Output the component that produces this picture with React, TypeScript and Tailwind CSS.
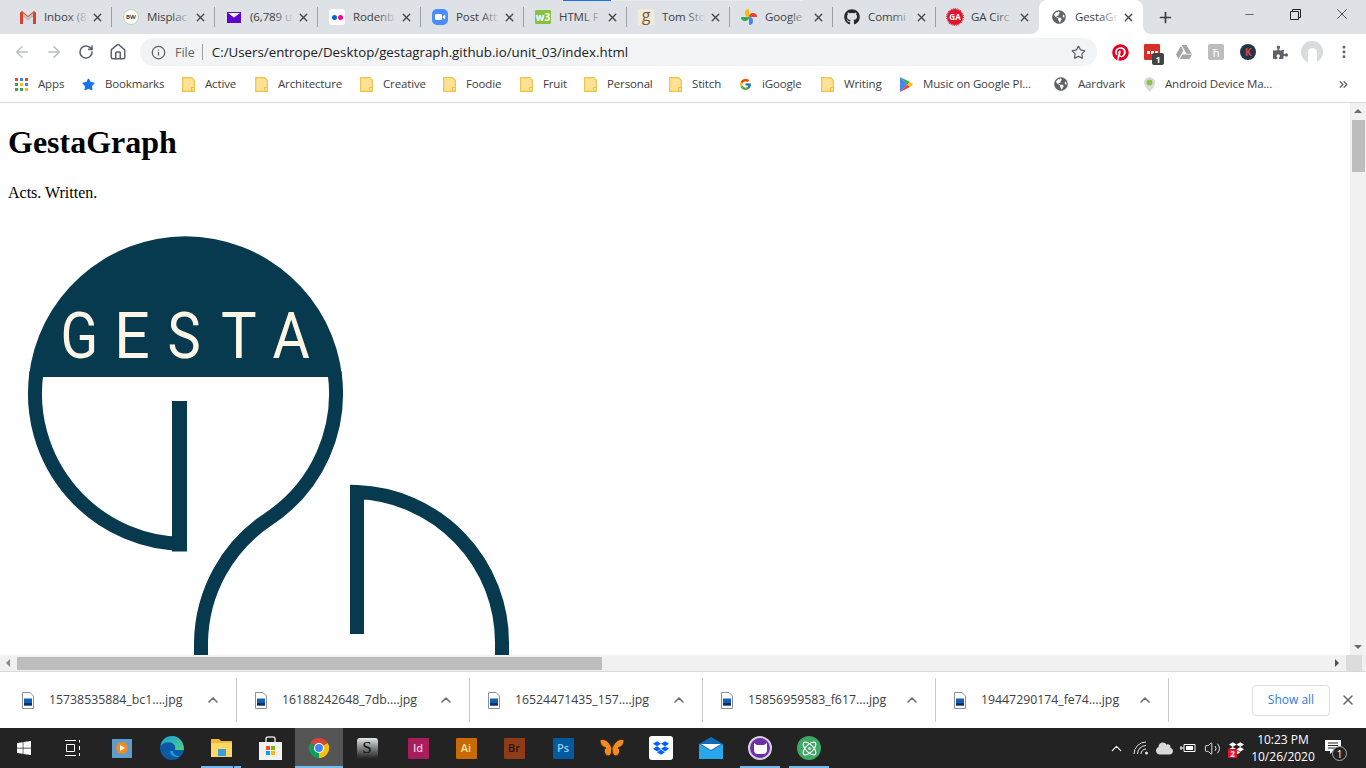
import { ArrowLeft, ArrowRight, RotateCw, Home, Info, Star, X, Plus, Minus, ChevronUp, ChevronsRight, MoreVertical, Volume2, Atom } from "lucide-react";
import { FaGithub, FaGlobeAmericas, FaPinterest, FaGoogleDrive, FaPuzzlePiece, FaWindows, FaDropbox, FaCloud, FaStar } from "react-icons/fa";
import { FcGoogle } from "react-icons/fc";
import type { ReactNode } from "react";

function Tab({ icon, title, last }: { icon: ReactNode; title: string; last?: boolean }) {
  return (
    <div className="relative flex h-[34px] w-[103px] shrink-0 items-center pl-[11px]">
      <div className="flex h-4 w-4 shrink-0 items-center justify-center">{icon}</div>
      <div className="relative ml-2 w-[44px] overflow-hidden whitespace-nowrap text-[11.5px] tracking-[-0.1px] text-[#3c4043]">
        {title}
        <div className="absolute inset-y-0 right-0 w-5 bg-gradient-to-r from-transparent to-[#dee1e6]" />
      </div>
      <X size={13} strokeWidth={2.6} className="ml-[3px] shrink-0 text-[#45484c]" />
      {!last && <div className="absolute right-0 top-[7px] h-5 w-px bg-[#9aa0a6]" />}
    </div>
  );
}

function Folder() {
  return (
    <svg width="13" height="15" viewBox="0 0 13 15" className="shrink-0">
      <path d="M.7.7h9l2.6 2.6v11H.7z" fill="#fde293" stroke="#f0c14b" strokeWidth="1.2" />
      <rect x="9.5" y="10.5" width="3" height="3.5" fill="#fde293" stroke="#f0c14b" />
    </svg>
  );
}

function Mark({ icon, label, className }: { icon: ReactNode; label: string; className: string }) {
  return (
    <div className={`flex shrink-0 items-center whitespace-nowrap text-[11.5px] tracking-[-0.15px] text-[#3c4043] ${className}`}>
      {icon}
      <span className="ml-[10px]">{label}</span>
    </div>
  );
}

function Download({ name, className }: { name: string; className: string }) {
  return (
    <div className={`flex h-[44px] shrink-0 items-center border-r border-[#c8c8c8] ${className}`}>
      <svg width="12" height="17" viewBox="0 0 12 17" className="shrink-0">
        <path d="M.5.5h7.5l3.5 3.5v12.500H.5z" fill="#fff" stroke="#8a8f94" />
        <rect x="2" y="6.500" width="8" height="7" fill="#0f5fb4" />
        <rect x="2" y="11" width="8" height="2.500" fill="#0b2f66" />
      </svg>
      <span className="ml-[15px] w-[156px] whitespace-nowrap text-[12.3px] text-[#3c4043]">{name}</span>
      <ChevronUp size={16} strokeWidth={2.4} className="text-[#6b6f73]" />
    </div>
  );
}

function Slot({ className, children }: { className?: string; children: ReactNode }) {
  return <div className={`flex h-10 w-12 shrink-0 items-center justify-center ${className ?? ""}`}>{children}</div>;
}

function AdobeTile({ label, bg, fg }: { label: string; bg: string; fg: string }) {
  return (
    <div className={`flex h-[21px] w-[21px] items-center justify-center rounded-[1px] text-[11px] font-semibold ${bg} ${fg}`}>
      {label}
    </div>
  );
}

function Logo() {
  const stroke = "#083a4f";
  return (
    <svg width="520" height="520" viewBox="8 217 520 520" className="ml-2 block shrink-0">
      <path d="M28.900 377A157.500 157.500 0 0 1 342.100 377Z" fill={stroke} />
      <g fill="#fdf6e6" fontFamily="Roboto, sans-serif" fontSize="65">
        <text transform="translate(60.500 358) scale(.85 1)">G</text>
        <text transform="translate(114 358) scale(.97 1)">E</text>
        <text transform="translate(167.500 358) scale(.86 1)">S</text>
        <text transform="translate(221 358) scale(.92 1)">T</text>
        <text transform="translate(272.500 358) scale(.88 1)">A</text>
      </g>
      <rect x="172" y="401" width="15" height="150.500" fill={stroke} />
      <g fill="none" stroke={stroke} strokeWidth="14">
        <path d="M187 544A150.500 150.500 0 0 1 36.500 372" />
        <path d="M334.500 372A150.500 150.500 0 0 1 269 518.700A150.500 150.500 0 0 0 201 642.500V700" />
        <path d="M357 634V492.100A150.500 150.500 0 0 1 502 642.500V700" />
      </g>
    </svg>
  );
}

export default function App() {
  return (
    <div className="flex h-[768px] w-[1366px] flex-col overflow-hidden bg-white font-['Open_Sans',sans-serif]">
      {/* tab strip */}
      <div className="relative flex h-[34px] shrink-0 items-center bg-[#dee1e6] pl-[9px]">
        <Tab
          title="Inbox (8"
          icon={
            <svg width="16" height="13" viewBox="0 0 16 13">
              <path d="M0 1.500V13h3V5l5 4 5-4v8h3V1.500L14 0 8 5 2 0z" fill="#d9402f" />
              <path d="M3 5l5 4 5-4V2L8 6 3 2z" fill="#c4c4c4" />
            </svg>
          }
        />
        <Tab
          title="Misplac"
          icon={
            <div className="flex h-4 w-4 items-center justify-center rounded-full border border-[#b9d3b0] bg-white text-[6px] font-bold text-[#444]">
              BW
            </div>
          }
        />
        <Tab
          title="(6,789 u"
          icon={
            <svg width="14" height="11" viewBox="0 0 14 11">
              <rect width="14" height="11" fill="#6001d2" />
              <path d="M1 1l6 4.500L13 1z" fill="#fff" />
            </svg>
          }
        />
        <Tab
          title="Rodenb"
          icon={
            <div className="flex h-4 w-4 items-center justify-center gap-px rounded-[3px] bg-white">
              <span className="h-[5px] w-[5px] rounded-full bg-[#0063dc]" />
              <span className="h-[5px] w-[5px] rounded-full bg-[#ff0084]" />
            </div>
          }
        />
        <Tab
          title="Post Att"
          icon={
            <svg width="16" height="16" viewBox="0 0 16 16">
              <rect width="16" height="16" rx="5" fill="#4a8cff" />
              <rect x="3" y="5" width="7" height="6" rx="1.300" fill="#fff" />
              <path d="M10.800 7.300l2.400-1.800v5l-2.400-1.800z" fill="#fff" />
            </svg>
          }
        />
        <Tab
          title="HTML F"
          icon={
            <div className="flex h-[14px] w-4 items-center justify-center rounded-[1px] bg-[#84c441] text-[10px] font-bold text-white">
              w3
            </div>
          }
        />
        <Tab
          title="Tom Sto"
          icon={
            <div className="flex h-4 w-4 items-center justify-center bg-[#f1ebd9] pb-1 text-[16px] leading-none text-[#7b5a35]">
              g
            </div>
          }
        />
        <Tab
          title="Google"
          icon={
            <svg width="16" height="16" viewBox="0 0 16 16">
              <path d="M8 8A4 4 0 0 1 4 4a4 4 0 0 1 4-4z" fill="#f9bc05" />
              <path d="M8 8a4 4 0 0 1 4-4 4 4 0 0 1 4 4z" fill="#ea4335" />
              <path d="M8 8a4 4 0 0 1 4 4 4 4 0 0 1-4 4z" fill="#4285f4" />
              <path d="M8 8a4 4 0 0 1-4 4 4 4 0 0 1-4-4z" fill="#34a853" />
            </svg>
          }
        />
        <Tab title="Commi" icon={<FaGithub size={16} className="text-[#24292e]" />} />
        <Tab
          title="GA Circ"
          last
          icon={
            <div className="flex h-4 w-4 items-center justify-center rounded-full bg-[#e0142d] text-[8px] font-bold text-white outline-1 outline-dotted outline-[#e0142d]">
              GA
            </div>
          }
        />
        {/* active tab */}
        <div className="relative flex h-[34px] w-[104px] shrink-0 items-center rounded-t-lg bg-white pl-[13px]">
          <FaGlobeAmericas size={14} className="shrink-0 text-[#5f6368]" />
          <div className="relative ml-[9px] w-[44px] overflow-hidden whitespace-nowrap text-[11.5px] tracking-[-0.1px] text-[#3c4043]">
            GestaGr
            <div className="absolute inset-y-0 right-0 w-5 bg-gradient-to-r from-transparent to-white" />
          </div>
          <X size={13} strokeWidth={2.6} className="ml-[3px] shrink-0 text-[#45484c]" />
          <svg width="8" height="8" viewBox="0 0 8 8" className="absolute bottom-0 left-[-8px]">
            <path d="M8 0v8H0a8 8 0 0 0 8-8z" fill="#fff" />
          </svg>
          <svg width="8" height="8" viewBox="0 0 8 8" className="absolute bottom-0 right-[-8px]">
            <path d="M0 0v8h8a8 8 0 0 1-8-8z" fill="#fff" />
          </svg>
        </div>
        <Plus size={17} strokeWidth={2.4} className="ml-[14px] text-[#3c4043]" />
        <div className="ml-auto flex h-[34px] items-start">
          <div className="flex h-7 w-[45px] items-center justify-center">
            <Minus size={13} strokeWidth={1.2} className="text-[#222]" />
          </div>
          <div className="flex h-7 w-[45px] items-center justify-center pl-px">
            <svg width="11" height="11" viewBox="0 0 11 11" fill="none" stroke="#222">
              <path d="M.5 2.500h8v8h-8zM2.500 2.500v-2h8v8h-2" />
            </svg>
          </div>
          <div className="flex h-7 w-[49px] items-center justify-center">
            <X size={18} strokeWidth={1} className="text-[#222]" />
          </div>
        </div>
        <div className="absolute left-[563px] top-0 h-px w-[48px] bg-[#1a73e8]" />
        <div className="absolute left-[611px] top-0 h-px w-[192px] bg-[#e8eaed]" />
      </div>

      {/* toolbar */}
      <div className="flex h-[34px] shrink-0 items-center pl-[6px] pt-[2px]">
        <div className="flex h-7 w-8 items-center justify-center"><ArrowLeft size={18} className="text-[#bcbfc3]" /></div>
        <div className="flex h-7 w-8 items-center justify-center"><ArrowRight size={18} className="text-[#bcbfc3]" /></div>
        <div className="flex h-7 w-8 items-center justify-center"><RotateCw size={16} strokeWidth={2.4} className="text-[#5f6368]" /></div>
        <div className="flex h-7 w-8 items-center justify-center"><Home size={18} strokeWidth={2} className="text-[#5f6368]" /></div>
        <div className="ml-[6px] flex h-7 w-[957px] shrink-0 items-center rounded-full bg-[#f1f3f4] pl-[11px] text-[14px]">
          <Info size={15} strokeWidth={2} className="text-[#5f6368]" />
          <span className="ml-[9px] pt-[2px] text-[12.5px] text-[#5f6368]">File</span>
          <div className="ml-[7px] h-4 w-px bg-[#9aa0a6]" />
          <span className="ml-[9px] whitespace-nowrap pt-[2px] text-[13.3px] text-[#202124]">C:/Users/entrope/Desktop/gestagraph.github.io/unit_03/index.html</span>
          <Star size={15} strokeWidth={2} className="ml-auto mr-[11px] text-[#5f6368]" />
        </div>
        <div className="ml-[7px] flex">
          <div className="flex h-7 w-8 items-center justify-center"><FaPinterest size={17} className="text-[#e60023]" /></div>
          <div className="relative flex h-7 w-8 items-center justify-center">
            <div className="flex h-4 w-4 items-center justify-center gap-px rounded-[1px] bg-[#d93025]">
              <span className="h-[3px] w-[3px] bg-white" /><span className="h-[3px] w-[3px] bg-white" /><span className="h-[3px] w-[3px] bg-white" />
            </div>
            <div className="absolute left-[16px] top-[15px] flex h-3 w-3 items-center justify-center rounded-[2px] bg-[#444] text-[9px] font-bold leading-none text-white">1</div>
          </div>
          <div className="flex h-7 w-8 items-center justify-center"><FaGoogleDrive size={16} className="text-[#a6a6a6]" /></div>
          <div className="flex h-7 w-8 items-center justify-center">
            <div className="flex h-4 w-4 items-center justify-center rounded-[2px] bg-[#bdbdbd] text-[11px] leading-none text-white">ħ</div>
          </div>
          <div className="flex h-7 w-8 items-center justify-center">
            <div className="flex h-4 w-4 items-center justify-center rounded-full bg-[#22344a] text-[10px] font-bold text-[#d8453a]">K</div>
          </div>
          <div className="flex h-7 w-8 items-center justify-center"><FaPuzzlePiece size={15} className="text-[#5f6368]" /></div>
          <div className="flex h-7 w-8 items-center justify-center">
            <div className="flex h-[22px] w-[22px] items-end justify-center rounded-full bg-[#d9dbdd]">
              <div className="h-[15px] w-[9px] rounded-t-full bg-white" />
            </div>
          </div>
          <div className="flex h-7 w-8 items-center justify-center"><MoreVertical size={16} strokeWidth={2.4} className="text-[#5f6368]" /></div>
        </div>
      </div>

      {/* bookmarks bar */}
      <div className="flex h-[35px] shrink-0 items-center border-b border-[#d6d8da] pb-[2px] pl-[15px]">
        <Mark
          className="w-[67px]"
          label="Apps"
          icon={
            <svg width="13" height="13" viewBox="0 0 13 13" className="shrink-0">
              <rect width="3" height="3" fill="#ea4335" /><rect x="5" width="3" height="3" fill="#4285f4" /><rect x="10" width="3" height="3" fill="#ea4335" />
              <rect y="5" width="3" height="3" fill="#34a853" /><rect x="5" y="5" width="3" height="3" fill="#fbbc05" /><rect x="10" y="5" width="3" height="3" fill="#4285f4" />
              <rect y="10" width="3" height="3" fill="#34a853" /><rect x="5" y="10" width="3" height="3" fill="#34a853" /><rect x="10" y="10" width="3" height="3" fill="#fbbc05" />
            </svg>
          }
        />
        <Mark className="w-[100px]" label="Bookmarks" icon={<FaStar size={13} className="shrink-0 text-[#1a73e8]" />} />
        <Mark className="w-[73px]" label="Active" icon={<Folder />} />
        <Mark className="w-[105px]" label="Architecture" icon={<Folder />} />
        <Mark className="w-[83px]" label="Creative" icon={<Folder />} />
        <Mark className="w-[77px]" label="Foodie" icon={<Folder />} />
        <Mark className="w-[64px]" label="Fruit" icon={<Folder />} />
        <Mark className="w-[85px]" label="Personal" icon={<Folder />} />
        <Mark className="w-[70px]" label="Stitch" icon={<Folder />} />
        <Mark className="w-[82px]" label="iGoogle" icon={<FcGoogle size={13} className="shrink-0" />} />
        <Mark className="w-[79px]" label="Writing" icon={<Folder />} />
        <Mark
          className="w-[154px]"
          label="Music on Google Pl..."
          icon={
            <svg width="13" height="15" viewBox="0 0 13 15" className="shrink-0">
              <path d="M0 0l7 7.500L0 15z" fill="#4285f4" />
              <path d="M0 0l10 5-3 2.500z" fill="#34a853" />
              <path d="M0 15l10-5-3-2.500z" fill="#ea4335" />
              <path d="M10 5l3 2.500-3 2.500-3-2.500z" fill="#fbbc05" />
            </svg>
          }
        />
        <Mark className="w-[90px]" label="Aardvark" icon={<FaGlobeAmericas size={14} className="shrink-0 text-[#5f6368]" />} />
        <Mark
          className="w-[193px]"
          label="Android Device Ma..."
          icon={
            <svg width="11" height="15" viewBox="0 0 11 15" className="shrink-0">
              <path d="M5.500 15C2 11 0 8.500 0 5.500a5.500 5.500 0 0 1 11 0C11 8.500 9 11 5.500 15z" fill="#d5dbd8" />
              <circle cx="5.500" cy="5.500" r="3" fill="#8bc34a" />
            </svg>
          }
        />
        <ChevronsRight size={13} strokeWidth={2.4} className="text-[#5f6368]" />
      </div>

      {/* page + scrollbars */}
      <div className="flex h-[552px] shrink-0">
        <div className="h-[552px] w-[1350px] overflow-hidden font-['Liberation_Serif',serif] text-black">
          <h1 className="mx-2 mb-[23px] mt-[21px] text-[32px] font-bold leading-[37px]">GestaGraph</h1>
          <p className="mx-2 mb-[15px] text-[16px] leading-[18px]">Acts. Written.</p>
          <Logo />
        </div>
        <div className="flex w-4 shrink-0 flex-col items-center bg-[#f1f1f1]">
          <div className="mt-[6px] h-0 w-0 border-x-[4px] border-b-[4px] border-x-transparent border-b-[#6b6b6b]" />
          <div className="mt-[7px] h-[52px] w-[13px] bg-[#bdbdbd]" />
          <div className="mt-auto mb-[6px] h-0 w-0 border-x-[4px] border-t-[4px] border-x-transparent border-t-[#6b6b6b]" />
        </div>
      </div>
      <div className="flex h-4 shrink-0 items-center bg-[#f1f1f1]">
        <div className="ml-[6px] h-0 w-0 border-y-[4px] border-r-[4px] border-y-transparent border-r-[#8a8a8a]" />
        <div className="ml-[7px] h-[13px] w-[585px] bg-[#bdbdbd]" />
        <div className="ml-[733px] h-0 w-0 border-y-[4px] border-l-[4px] border-y-transparent border-l-[#505050]" />
        <div className="ml-[7px] h-4 w-[16px] bg-[#dcdcdc]" />
      </div>

      {/* download shelf */}
      <div className="flex h-[57px] shrink-0 items-center border-t border-[#d6d8da] bg-white">
        <Download className="w-[237px] pl-[22px]" name="15738535884_bc1....jpg" />
        <Download className="w-[233px] pl-[18px]" name="16188242648_7db....jpg" />
        <Download className="w-[233px] pl-[18px]" name="16524471435_157....jpg" />
        <Download className="w-[233px] pl-[18px]" name="15856959583_f617....jpg" />
        <Download className="w-[233px] pl-[18px]" name="19447290174_fe74....jpg" />
        <button className="ml-[83px] h-[31px] w-[78px] rounded-[4px] border border-[#dadce0] text-[12px] font-medium text-[#2f7bea]">Show all</button>
        <X size={16} strokeWidth={2.2} className="ml-[10px] text-[#5f6368]" />
      </div>

      {/* taskbar */}
      <div className="flex h-10 shrink-0 items-center bg-[#232323] text-white">
        <Slot><FaWindows size={16} /></Slot>
        <Slot>
          <svg width="17" height="16" viewBox="0 0 17 16" fill="none" stroke="#fff">
            <path d="M1 .5h11M1 15.500h11M2.500 4.500h8v7h-8zM15.500 0v2.500M15.500 6v4M15.500 13v3" />
          </svg>
        </Slot>
        <Slot className="ml-[2px]">
          <div className="flex h-[19px] w-5 items-center justify-center bg-[#5f9cc9]">
            <div className="flex h-3 w-3 items-center justify-center rounded-full bg-[#f08a24]">
              <div className="h-0 w-0 border-y-[3px] border-l-[5px] border-y-transparent border-l-white" />
            </div>
          </div>
        </Slot>
        <Slot className="ml-[2px]">
          <svg width="24" height="24" viewBox="0 0 24 24">
            <defs>
              <linearGradient id="edgeTop" x1="0" y1="0" x2="1" y2="1">
                <stop offset="0" stopColor="#1b9de2" />
                <stop offset="1" stopColor="#52d17c" />
              </linearGradient>
            </defs>
            <circle cx="12" cy="12" r="12" fill="#0c59a4" />
            <path d="M24 14C24 6 19 0 12 0 6 0 1.500 4 .5 10c2-3 6-4.500 10-3.500 4 1 5.500 4 4.500 7.500H24z" fill="url(#edgeTop)" />
            <path d="M10 15c0 4 4 6 8 6l2-1.500c-4 1-7-1-7-4.500z" fill="#1b9de2" />
          </svg>
        </Slot>
        <Slot className="relative ml-px">
          <svg width="21" height="18" viewBox="0 0 21 18">
            <path d="M0 0h8l2 2h11v16H0z" fill="#f0b93c" />
            <rect y="4" width="21" height="14" fill="#ffd765" />
            <rect x="7" y="10" width="8" height="7" fill="#3d9ae0" />
          </svg>
          <div className="absolute bottom-0 left-1 h-[2px] w-[32px] bg-[#76b9ed]" />
          <div className="absolute bottom-0 left-[37px] h-[2px] w-[7px] bg-[#76b9ed]" />
        </Slot>
        <Slot className="ml-px">
          <svg width="23" height="24" viewBox="0 0 23 24">
            <path d="M7 7V3a2 2 0 0 1 2-2h5a2 2 0 0 1 2 2v4" fill="none" stroke="#d8d8d8" strokeWidth="1.500" />
            <path d="M0 6h23v18H0z" fill="#f2f2f2" />
            <rect x="7" y="10" width="4" height="4" fill="#f25022" />
            <rect x="12" y="10" width="4" height="4" fill="#7fba00" />
            <rect x="7" y="15" width="4" height="4" fill="#00a4ef" />
            <rect x="12" y="15" width="4" height="4" fill="#ffb900" />
          </svg>
        </Slot>
        <Slot className="relative ml-px bg-[#555555]">
          <svg width="22" height="22" viewBox="0 0 24 24">
            <path d="M12 12L2.470 6.500A11 11 0 0 1 21.530 6.500Z" fill="#db4437" />
            <path d="M12 12L21.530 6.500A11 11 0 0 1 12 23Z" fill="#f4c20d" />
            <path d="M12 12L12 23A11 11 0 0 1 2.470 6.500Z" fill="#0f9d58" />
            <circle cx="12" cy="12" r="5.500" fill="#fff" />
            <circle cx="12" cy="12" r="4.300" fill="#4285f4" />
          </svg>
          <div className="absolute inset-x-0 bottom-0 h-[2px] bg-[#76b9ed]" />
        </Slot>
        <Slot>
          <div className="flex h-[21px] w-[21px] items-center justify-center rounded-[3px] bg-gradient-to-b from-[#e8e8e8] to-[#222] font-['Liberation_Serif',serif] text-[17px] text-[#111]">S</div>
        </Slot>
        <Slot className="ml-[3px]"><AdobeTile label="Id" bg="bg-[#a81d5c]" fg="text-[#f4c6dc]" /></Slot>
        <Slot><AdobeTile label="Ai" bg="bg-[#c86a00]" fg="text-[#ffe0a0]" /></Slot>
        <Slot><AdobeTile label="Br" bg="bg-[#8f3d17]" fg="text-[#2c1208]" /></Slot>
        <Slot className="ml-px"><AdobeTile label="Ps" bg="bg-[#045a9e]" fg="text-[#8fd0f5]" /></Slot>
        <Slot className="ml-px">
          <svg width="24" height="20" viewBox="0 0 24 20">
            <path d="M12 10C9 3 4 0 0 2c0 5 3 7 6 8-3 1-2 7 2 8 3 0 4-4 4-8z" fill="#f08a24" stroke="#3a2a10" />
            <path d="M12 10c3-7 8-10 12-8 0 5-3 7-6 8 3 1 2 7-2 8-3 0-4-4-4-8z" fill="#f08a24" stroke="#3a2a10" />
          </svg>
        </Slot>
        <Slot className="ml-px">
          <div className="flex h-6 w-6 items-center justify-center rounded-[3px] bg-white"><FaDropbox size={16} className="text-[#0061ff]" /></div>
        </Slot>
        <Slot className="ml-[2px]">
          <svg width="24" height="22" viewBox="0 0 24 22">
            <path d="M0 7L12 0l12 7v15H0z" fill="#0f6cbd" />
            <path d="M0 7l12 7 12-7v15H0z" fill="#28a8ea" />
            <path d="M2 7h20l-10 6z" fill="#fff" />
          </svg>
        </Slot>
        <Slot className="relative ml-px">
          <div className="flex h-6 w-6 items-center justify-center rounded-full border-2 border-[#d8d0e0] bg-[#6f2da8]">
            <svg width="13" height="11" viewBox="0 0 13 11">
              <path d="M0 0l3 2h7l3-2v7a4 4 0 0 1-4 4H4a4 4 0 0 1-4-4z" fill="#fff" />
            </svg>
          </div>
          <div className="absolute bottom-0 left-1 h-[2px] w-10 bg-[#76b9ed]" />
        </Slot>
        <Slot className="relative ml-px">
          <div className="flex h-6 w-6 items-center justify-center rounded-full bg-[#3fa866]"><Atom size={17} strokeWidth={1.6} className="text-white" /></div>
          <div className="absolute bottom-0 left-1 h-[2px] w-10 bg-[#76b9ed]" />
        </Slot>

        <div className="ml-auto flex items-center">
          <ChevronUp size={17} strokeWidth={1.5} />
          <svg width="16" height="14" viewBox="0 0 16 14" fill="none" stroke="#e6e6e6" className="ml-[8px]">
            <path d="M1 13A12 12 0 0 1 13 1M4.500 13a8.500 8.500 0 0 1 8.500-8.500M8 13a5 5 0 0 1 5-5" />
            <circle cx="13.500" cy="12" r="1.500" fill="#e6e6e6" stroke="none" />
          </svg>
          <FaCloud size={17} className="ml-[7px] text-[#d9d9d9]" />
          <svg width="16" height="12" viewBox="0 0 16 12" fill="none" stroke="#fff" className="ml-[7px]">
            <path d="M4 2.500h11v7H4zM4 6H0M1 4v4" />
            <rect x="6" y="4" width="7" height="4" fill="#fff" stroke="none" />
          </svg>
          <Volume2 size={17} strokeWidth={1.2} className="ml-[8px]" />
          <div className="relative ml-[7px] flex h-4 w-4 items-center justify-center">
            <FaDropbox size={15} />
            <div className="absolute bottom-[-2px] left-0 flex h-[9px] w-[9px] items-center justify-center bg-[#e81123] text-[8px] font-bold leading-none">2</div>
          </div>
          <div className="ml-[4px] flex w-[70px] flex-col items-center text-[12px] leading-[17px]">
            <span>10:23 PM</span>
            <span>10/26/2020</span>
          </div>
          <div className="relative ml-[7px] mr-[25px] h-4 w-4">
            <svg width="16" height="15" viewBox="0 0 16 15">
              <path d="M0 0h16v11H8l-3 3v-3H0z" fill="#fff" />
              <path d="M3 3h10M3 5.500h10M3 8h7" stroke="#232323" />
            </svg>
            <div className="absolute left-[7px] top-[6px] flex h-[15px] w-[15px] items-center justify-center rounded-full border border-[#aaa] bg-[#232323] text-[10px] leading-none">1</div>
          </div>
        </div>
      </div>
    </div>
  );
}
